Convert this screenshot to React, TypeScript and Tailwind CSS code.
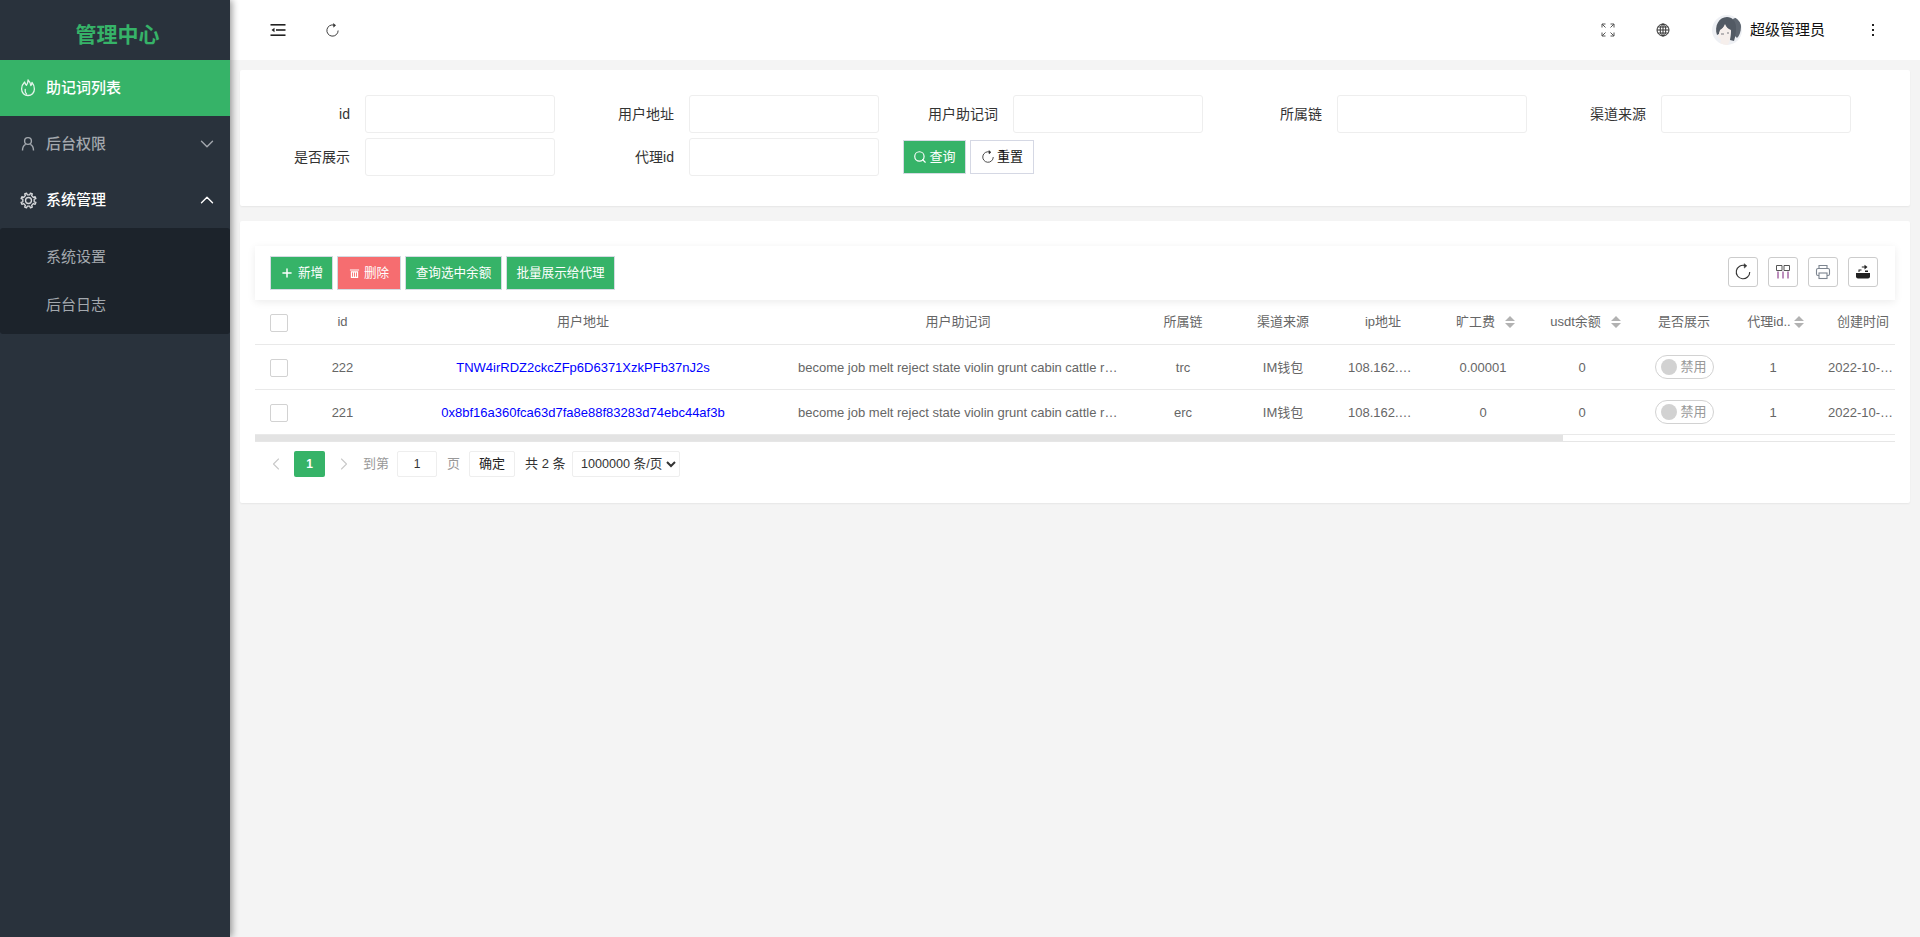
import React from "react";
import { ChevronDown, ChevronLeft, ChevronRight, ChevronUp, Plus, Search } from "lucide-react";

const FlameIcon = () => (
  <svg width="16" height="18" viewBox="0 0 16 18" fill="none" stroke="currentColor" strokeWidth="1.3" strokeLinejoin="round" strokeLinecap="round">
    <path d="M4.600 3C2.800 4.800 1.600 7 1.600 10c0 3.800 2.800 6.500 6.400 6.500s6.400-2.700 6.400-6.500c0-2.600-.9-4.800-2.400-6.600-.1 1.400-.5 2.400-1.200 3.100C10.600 4.500 9.800 2.500 8 .9c.1 2-.5 3.900-1.600 5.400C5.600 5.400 5 4.300 4.600 3z" />
    <path d="M5.200 10.500c-.3 2 .1 3.500 1.300 4.600" />
  </svg>
);

const UserIcon = () => (
  <svg width="16" height="16" viewBox="0 0 16 16" fill="none" stroke="currentColor" strokeWidth="1.4">
    <circle cx="8" cy="5" r="3.400" />
    <path d="M2.500 14.500c0-3 1.500-5.500 3.200-6.200M13.500 14.500c0-3-1.500-5.500-3.200-6.200" />
  </svg>
);

// eight-toothed outline, built from polar points
const gearPath = (() => {
  const points: string[] = [];
  for (let i = 0; i < 8; i++) {
    const a = (i * Math.PI) / 4 - Math.PI / 8;
    [
      [8.2, a - 0.17],
      [10.8, a - 0.13],
      [10.8, a + 0.13],
      [8.2, a + 0.17],
    ].forEach(([r, t]) => {
      points.push(`${(12 + r * Math.cos(t)).toFixed(2)} ${(12 + r * Math.sin(t)).toFixed(2)}`);
    });
  }
  return `M${points.join("L")}Z`;
})();

const GearIcon = () => (
  <svg width="17" height="17" viewBox="0 0 24 24" fill="none" stroke="currentColor" strokeWidth="1.900" strokeLinejoin="round">
    <path d={gearPath} />
    <circle cx="12" cy="12" r="4.200" />
  </svg>
);

const FoldIcon = () => (
  <svg width="16" height="14" viewBox="0 0 16 14" fill="#222">
    <rect x="0.500" y="1" width="15" height="1.600" />
    <rect x="6" y="6.200" width="9.500" height="1.600" />
    <rect x="0.500" y="11.400" width="15" height="1.600" />
    <path d="M1.500 7l3-2.200v4.400z" />
  </svg>
);

const RefreshIcon = ({ size = 16 }: { size?: number }) => (
  <svg width={size} height={size} viewBox="0 0 16 16" fill="none" stroke="#333" strokeWidth="1">
    <path d="M9.800 2.300A6 6 0 1 0 14 8" />
    <path d="M9 .6l2.400 1.900L9.200 4.500z" fill="#333" strokeWidth="0.500" />
  </svg>
);

const FullscreenIcon = () => (
  <svg width="14" height="14" viewBox="0 0 14 14" fill="none" stroke="#555" strokeWidth="1">
    <path d="M1 4.500V1h3.500M1 1l3.500 3.500M13 4.500V1H9.500M13 1L9.500 4.500M1 9.500V13h3.500M1 13l3.500-3.500M13 9.500V13H9.500M13 13L9.500 9.500" />
  </svg>
);

const GlobeIcon = () => (
  <svg width="14" height="14" viewBox="0 0 14 14" fill="none" stroke="#333" strokeWidth="1">
    <circle cx="7" cy="7" r="6" />
    <ellipse cx="7" cy="7" rx="2.800" ry="6" />
    <path d="M7 1v12M1 7h12M1.800 4h10.400M1.800 10h10.400" />
  </svg>
);

const Avatar = () => (
  <svg width="30" height="30" viewBox="0 0 30 30" className="rounded-full">
    <rect width="30" height="30" fill="#eef0f4" />
    <path d="M21 4c4-3 8 1 8 8 0 5-2 9-4 11l-3-3z" fill="#5e6670" />
    <path d="M5 20C2 11 7 2 15 2c5 0 9 4 9 10 0 4 0 8-2 14l-4-1 1-9c-3-1-5-3-6-6-1 3-4 5-5 6 0 1-1 2-1 3z" fill="#525a64" />
    <path d="M8 15c2-1 4-3 5-6 1 3 3 5 6 6l-1 9-2 6H8l1-5-3-3z" fill="#f6efec" />
    <path d="M9 19h3M15 18h2" stroke="#7a7a80" strokeWidth="1" />
  </svg>
);

const ColumnsIcon = () => (
  <svg width="16" height="16" viewBox="0 0 16 16" fill="none" stroke="#555" strokeWidth="1">
    <path d="M1.500 1.500h5.500v5H1.500zM9 1.500h5.500v5H9z" />
    <path d="M3 7.500v7M8 7.500v7M13 7.500v7" stroke="#7a1f7a" />
  </svg>
);

const PrintIcon = () => (
  <svg width="16" height="16" viewBox="0 0 16 16" fill="none" stroke="#7d8590" strokeWidth="1.100">
    <path d="M4 4.500V1.500h8v3" />
    <rect x="1.500" y="4.500" width="13" height="7" rx="1.500" />
    <rect x="4" y="9" width="8" height="5.500" fill="#fff" />
  </svg>
);

const ExportIcon = () => (
  <svg width="16" height="16" viewBox="0 0 16 16" fill="#222">
    <path d="M1 9h14v3.500a2 2 0 0 1-2 2H3a2 2 0 0 1-2-2z" />
    <path d="M3.500 8V5.500h3v1h-2V8zM9.500 5.500V3.500H6.800v-1h2.700V.8L12.500 3l-3 2.500z" />
    <path d="M10 8V6.500h3V8z" />
  </svg>
);

const TrashIcon = () => (
  <svg width="11" height="11" viewBox="0 0 12 12" fill="#fff">
    <path d="M1 1.500h10v1.300H1zM2 3.600h8V11H2zM3.400 5v4.600h1V5zM5.500 5v4.600h1V5zM7.600 5v4.600h1V5z" fillRule="evenodd" />
  </svg>
);

const SortIcon = () => (
  <svg width="10" height="12" viewBox="0 0 10 12" fill="#b2b2b2" className="shrink-0">
    <path d="M5 0l5 5H0zM5 12L0 7h10z" />
  </svg>
);

const Checkbox = () => (
  <span className="block w-[18px] h-[18px] border border-[#d2d2d2] rounded-[2px] bg-white" />
);

const Switch = () => (
  <div className="inline-flex items-center justify-between w-[59px] h-[24px] border border-[#d2d2d2] rounded-full pl-[5px] pr-[6px] text-[13px] text-[#999]">
    <span className="w-[16px] h-[16px] rounded-full bg-[#d2d2d2]" />
    <span>禁用</span>
  </div>
);

const formFields = ["id", "用户地址", "用户助记词", "所属链", "渠道来源", "是否展示", "代理id"];

const rows = [
  {
    id: 222,
    address: "TNW4irRDZ2ckcZFp6D6371XzkPFb37nJ2s",
    chain: "trc",
    fee: "0.00001",
  },
  {
    id: 221,
    address: "0x8bf16a360fca63d7fa8e88f83283d74ebc44af3b",
    chain: "erc",
    fee: "0",
  },
];

const mnemonic =
  "become job melt reject state violin grunt cabin cattle ranch fiber weapon";

const Sidebar = () => (
  <aside className="relative z-10 w-[230px] shrink-0 bg-[#29323c] shadow-[2px_0_7px_rgba(0,0,0,0.4)]">
    <div className="h-[60px] flex items-center justify-center pl-[5px] pt-[10px] text-[21px] font-bold text-[#36b368]">
      管理中心
    </div>
    <div className="h-[56px] flex items-center pl-[20px] bg-[#36b368] text-white text-[15px] font-medium">
      <span className="w-[26px] text-[#e4f5eb]">
        <FlameIcon />
      </span>
      助记词列表
    </div>
    <div className="h-[56px] flex items-center pl-[20px] pr-[12px] text-[#a3a8ae] text-[15px] font-medium">
      <span className="w-[26px]">
        <UserIcon />
      </span>
      <span className="flex-1">后台权限</span>
      <ChevronDown size={22} strokeWidth={1.5} />
    </div>
    <div className="h-[56px] flex items-center pl-[20px] pr-[12px] text-white text-[15px] font-medium">
      <span className="w-[26px] text-[#d5d7da]">
        <GearIcon />
      </span>
      <span className="flex-1">系统管理</span>
      <ChevronUp size={22} strokeWidth={1.5} />
    </div>
    <div className="bg-[#1c232b] py-[5px] rounded-[3px] text-[#a3a8ae] text-[15px]">
      <div className="h-[48px] flex items-center pl-[46px]">系统设置</div>
      <div className="h-[48px] flex items-center pl-[46px]">后台日志</div>
    </div>
  </aside>
);

const Topbar = () => (
  <header className="h-[60px] bg-white flex items-center text-[#111]">
    <span className="ml-[40px]">
      <FoldIcon />
    </span>
    <span className="ml-[39px]">
      <RefreshIcon size={15} />
    </span>
    <span className="ml-auto">
      <FullscreenIcon />
    </span>
    <span className="ml-[41px]">
      <GlobeIcon />
    </span>
    <span className="ml-[42px] flex items-center gap-[8px]">
      <Avatar />
      <span className="text-[15px]">超级管理员</span>
    </span>
    <span className="ml-[47px] mr-[46px] flex flex-col gap-[3px]">
      <i className="w-[2px] h-[2px] bg-[#222]" />
      <i className="w-[2px] h-[2px] bg-[#222]" />
      <i className="w-[2px] h-[2px] bg-[#222]" />
    </span>
  </header>
);

const SearchPanel = () => (
  <section className="h-[136px] bg-white rounded-[2px] shadow-[0_1px_2px_rgba(0,0,0,0.06)] pt-[25px] pl-[5px]">
    <div className="flex flex-wrap gap-y-[5px]">
      {formFields.map((label) => (
        <div key={label} className="w-[324px] h-[38px] flex items-center">
          <label className="w-[105px] mr-[15px] text-right text-[14px] text-[#333]">{label}</label>
          <input className="w-[190px] h-[38px] border border-[#eeeeee] rounded-[3px] bg-white" />
        </div>
      ))}
      <div className="h-[38px] flex items-center gap-[4px] ml-[10px]">
        <button className="w-[63px] h-[34px] flex items-center justify-center gap-[2px] bg-[#36b368] border border-[#d5dbe3] text-white text-[13px]">
          <Search size={14} />
          查询
        </button>
        <button className="w-[64px] h-[34px] flex items-center justify-center gap-[2px] bg-white border border-[#d5d8e4] text-[#111] text-[13px]">
          <RefreshIcon size={14} />
          重置
        </button>
      </div>
    </div>
  </section>
);

const ToolButton = ({ children, className }: { children: React.ReactNode; className: string }) => (
  <button
    className={`h-[34px] flex items-center justify-center gap-[4px] border border-[#d5dbe3] text-white text-[12.6px] ${className}`}
  >
    {children}
  </button>
);

const IconBox = ({ children }: { children: React.ReactNode }) => (
  <span className="w-[30px] h-[30px] flex items-center justify-center border border-[#cccccc] rounded-[3px]">
    {children}
  </span>
);

const DataTable = () => (
  <div className="w-[1640px] overflow-hidden">
    <table className="table-fixed w-[1657px] text-[13px] text-[#666]">
      <colgroup>
        <col className="w-[50px]" />
        <col className="w-[75px]" />
        <col className="w-[406px]" />
        <col className="w-[344px]" />
        <col className="w-[106px]" />
        <col className="w-[92px]" />
        <col className="w-[108px]" />
        <col className="w-[94px]" />
        <col className="w-[104px]" />
        <col className="w-[100px]" />
        <col className="w-[78px]" />
        <col className="w-[100px]" />
      </colgroup>
      <thead>
        <tr className="h-[44px] border-b border-[#e9e9e9]">
          <th className="pl-[15px] pt-[2px] font-normal">
            <Checkbox />
          </th>
          <th className="font-normal">id</th>
          <th className="font-normal">用户地址</th>
          <th className="font-normal">用户助记词</th>
          <th className="font-normal">所属链</th>
          <th className="pl-[2px] font-normal">渠道来源</th>
          <th className="pl-[2px] font-normal">ip地址</th>
          <th className="font-normal">
            <span className="flex items-center justify-center gap-[10px] pl-[5px]">
              旷工费
              <SortIcon />
            </span>
          </th>
          <th className="font-normal">
            <span className="flex items-center justify-center gap-[10px] pl-[7px]">
              usdt余额
              <SortIcon />
            </span>
          </th>
          <th className="font-normal">是否展示</th>
          <th className="font-normal">
            <span className="flex items-center justify-center gap-[3px] pl-[5px]">
              代理id..
              <SortIcon />
            </span>
          </th>
          <th className="pl-[2px] font-normal">创建时间</th>
        </tr>
      </thead>
      <tbody>
        {rows.map((row) => (
          <tr key={row.id} className="h-[45px] border-b border-[#e9e9e9] text-center [&>td]:pt-[2px]">
            <td className="pl-[15px]">
              <Checkbox />
            </td>
            <td>{row.id}</td>
            <td className="text-[#0000ff]">{row.address}</td>
            <td className="px-[12px]">
              <div className="truncate">{mnemonic}</div>
            </td>
            <td>{row.chain}</td>
            <td className="pl-[2px]">IM钱包</td>
            <td className="pl-[20px] pr-[24px]">
              <div className="truncate">108.162.215.24</div>
            </td>
            <td>{row.fee}</td>
            <td>0</td>
            <td>
              <Switch />
            </td>
            <td>1</td>
            <td className="pl-[16px] pr-[17px] text-left">
              <div className="truncate">2022-10-19 20:13:02</div>
            </td>
          </tr>
        ))}
      </tbody>
    </table>
    <div className="h-[7px] border-b border-[#e6e6e6]">
      <div className="w-[1308px] h-[6px] bg-[#e3e3e3]" />
    </div>
  </div>
);

const Pagination = () => (
  <div className="flex items-center h-[26px] mt-[9px] pl-[11px] text-[13px] text-[#999]">
    <ChevronLeft size={20} strokeWidth={1.3} className="text-[#c9c9c9]" />
    <span className="ml-[8px] w-[31px] h-[26px] flex items-center justify-center rounded-[2px] bg-[#36b368] text-white font-bold text-[12px]">
      1
    </span>
    <ChevronRight size={20} strokeWidth={1.3} className="ml-[9px] text-[#c9c9c9]" />
    <span className="ml-[9px]">到第</span>
    <span className="ml-[8px] w-[40px] h-[26px] flex items-center justify-center border border-[#eeeeee] rounded-[2px] text-[#333] text-[12px]">
      1
    </span>
    <span className="ml-[10px]">页</span>
    <span className="ml-[9px] w-[46px] h-[26px] flex items-center justify-center border border-[#eeeeee] rounded-[2px] text-[#222]">
      确定
    </span>
    <span className="ml-[10px] w-[37px] text-[#333] whitespace-nowrap">共 2 条</span>
    <select className="ml-[10px] w-[108px] h-[26px] pl-[4px] border border-[#eeeeee] rounded-[2px] bg-white text-[12.6px] text-[#333]">
      <option>1000000 条/页</option>
    </select>
  </div>
);

const TablePanel = () => (
  <section className="h-[282px] bg-white rounded-[2px] shadow-[0_1px_2px_rgba(0,0,0,0.06)] pt-[25px] pl-[15px] pr-[15px]">
    <div className="h-[54px] flex items-start justify-between pt-[10px] pl-[15px] pr-[17px] bg-white shadow-[0_2px_8px_rgba(0,0,0,0.08)] relative">
      <div className="flex gap-[4px]">
        <ToolButton className="w-[63px] bg-[#36b368]">
          <Plus size={14} strokeWidth={2.5} />
          新增
        </ToolButton>
        <ToolButton className="w-[64px] bg-[#f66d70]">
          <TrashIcon />
          删除
        </ToolButton>
        <ToolButton className="w-[97px] bg-[#36b368]">查询选中余额</ToolButton>
        <ToolButton className="w-[109px] bg-[#36b368]">批量展示给代理</ToolButton>
      </div>
      <div className="flex gap-[10px] mt-[1px]">
        <IconBox>
          <RefreshIcon size={18} />
        </IconBox>
        <IconBox>
          <ColumnsIcon />
        </IconBox>
        <IconBox>
          <PrintIcon />
        </IconBox>
        <IconBox>
          <ExportIcon />
        </IconBox>
      </div>
    </div>
    <DataTable />
    <Pagination />
  </section>
);

export default function App() {
  return (
    <div
      className="flex h-[937px] overflow-hidden bg-[#f4f4f4]"
      style={{ fontFamily: '"Liberation Sans", "Noto Sans CJK SC", sans-serif' }}
    >
      <Sidebar />
      <div className="flex-1 min-w-0">
        <Topbar />
        <main className="pt-[10px] pl-[10px] pr-[10px] flex flex-col gap-[15px]">
          <SearchPanel />
          <TablePanel />
        </main>
      </div>
    </div>
  );
}
